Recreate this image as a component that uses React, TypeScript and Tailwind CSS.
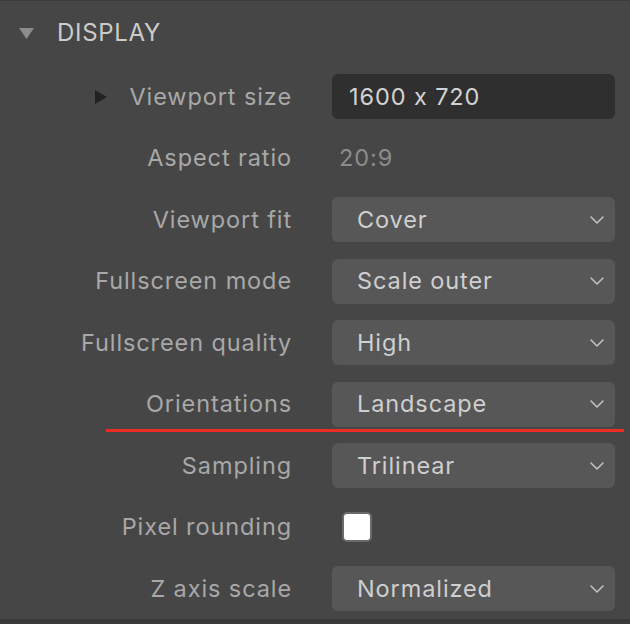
import { ChevronDown } from 'lucide-react'

type Row =
  | { label: string; kind: 'input'; value: string; caret?: boolean }
  | { label: string; kind: 'text'; value: string }
  | { label: string; kind: 'select'; value: string; marked?: boolean }
  | { label: string; kind: 'check' }

const rows: Row[] = [
  { label: 'Viewport size', kind: 'input', value: '1600 x 720', caret: true },
  { label: 'Aspect ratio', kind: 'text', value: '20:9' },
  { label: 'Viewport fit', kind: 'select', value: 'Cover' },
  { label: 'Fullscreen mode', kind: 'select', value: 'Scale outer' },
  { label: 'Fullscreen quality', kind: 'select', value: 'High' },
  { label: 'Orientations', kind: 'select', value: 'Landscape', marked: true },
  { label: 'Sampling', kind: 'select', value: 'Trilinear' },
  { label: 'Pixel rounding', kind: 'check' },
  { label: 'Z axis scale', kind: 'select', value: 'Normalized' },
]

function Control({ row }: { row: Row }) {
  if (row.kind === 'input') {
    return (
      <div className="h-full rounded-md bg-[#2f2f2f] pl-[17px] flex items-center text-[#d2d2d2]">
        {row.value}
      </div>
    )
  }
  if (row.kind === 'text') {
    return <div className="h-full pl-[7px] flex items-center text-[#8c8c8c]">{row.value}</div>
  }
  if (row.kind === 'check') {
    return (
      <div className="h-full pl-[10px] flex items-center">
        <div className="w-[30px] h-[30px] rounded-[5px] bg-white border-2 border-[#6a6a6a]" />
      </div>
    )
  }
  return (
    <div className="h-full rounded-md bg-[#575757] pl-[25px] pr-[6px] flex items-center justify-between text-[#cfcfcf]">
      <span>{row.value}</span>
      <ChevronDown size={24} strokeWidth={1.5} className="text-[#c4c4c4]" />
    </div>
  )
}

export default function App() {
  return (
    <div
      className="w-[630px] h-[624px] bg-[#464646] border-t border-[#3b3b3b] overflow-hidden flex flex-col [font-feature-settings:'calt'_0]"
      style={{ fontFamily: 'Inter, "Noto Sans", sans-serif' }}
    >
      <div className="flex items-center h-[66px] pl-[19px] pb-[2px]">
        <svg width="15" height="11" viewBox="0 0 15 11" className="mr-[23px]">
          <polygon points="0,0 15,0 7.5,11" fill="#8c8c8c" />
        </svg>
        <span className="text-[24px] text-[#cbcbcb] tracking-[0.7px]">DISPLAY</span>
      </div>

      <div className="flex flex-col gap-[16.5px] mt-[7px] text-[23.5px] tracking-[0.9px]">
        {rows.map((row) => (
          <div key={row.label} className="relative flex h-[45px]">
            <div className="w-[292px] shrink-0 flex items-center justify-end text-[#a8a8a8]">
              {row.kind === 'input' && row.caret && (
                <svg width="12" height="14" viewBox="0 0 12 14" className="mr-[22px]">
                  <polygon points="0,0 12,7 0,14" fill="#222222" />
                </svg>
              )}
              {row.label}
            </div>
            <div className="ml-[40px] w-[283px]">
              <Control row={row} />
            </div>
            {row.kind === 'select' && row.marked && (
              <div className="absolute left-[106px] right-[6px] top-[47px] h-[3px] bg-[#ee2b24]" />
            )}
          </div>
        ))}
      </div>

      <div className="mt-auto h-[5px] bg-[#3a3a3a]" />
    </div>
  )
}
